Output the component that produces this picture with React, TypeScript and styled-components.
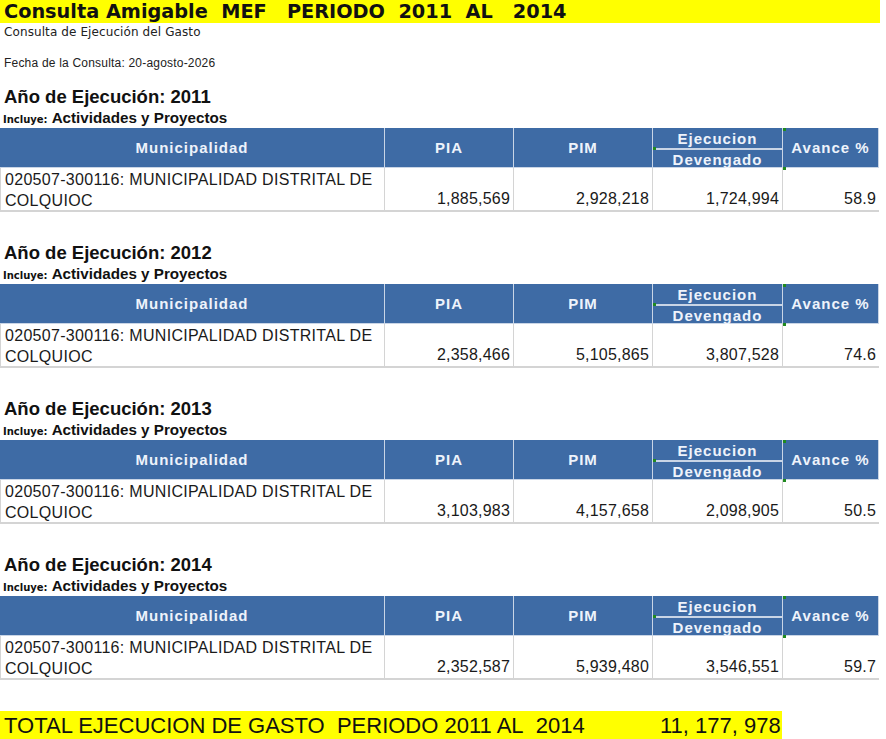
import React from 'react';
import styled, { createGlobalStyle } from 'styled-components';

const GlobalStyle = createGlobalStyle`
  html, body {
    margin: 0;
    padding: 0;
    background: #ffffff;
    font-family: "Liberation Sans", Arial, sans-serif;
    color: #111111;
  }
`;

type Row = { year: number; pia: string; pim: string; dev: string; avance: string };

const rows: Row[] = [
  { year: 2011, pia: '1,885,569', pim: '2,928,218', dev: '1,724,994', avance: '58.9' },
  { year: 2012, pia: '2,358,466', pim: '5,105,865', dev: '3,807,528', avance: '74.6' },
  { year: 2013, pia: '3,103,983', pim: '4,157,658', dev: '2,098,905', avance: '50.5' },
  { year: 2014, pia: '2,352,587', pim: '5,939,480', dev: '3,546,551', avance: '59.7' },
];

const COLS = '385px 129px 139px 130px 96px';

const App: React.FC = () => (
  <Page>
    <GlobalStyle />
    <TitleBar>{'Consulta Amigable  MEF   PERIODO  2011  AL   2014'}</TitleBar>
    <SubTitle>Consulta de Ejecución del Gasto</SubTitle>
    <Fecha>Fecha de la Consulta: 20-agosto-2026</Fecha>
    {rows.map((r, i) => (
      <Section key={r.year} first={i === 0}>
        <YearTitle>Año de Ejecución: {r.year}</YearTitle>
        <Incluye>
          <IncluyeTag>Incluye:</IncluyeTag>
          <span>Actividades y Proyectos</span>
        </Incluye>
        <Table>
          <HeadCell>Municipalidad</HeadCell>
          <HeadCell>PIA</HeadCell>
          <HeadCell>PIM</HeadCell>
          <SplitHead>
            <SplitPart>Ejecucion</SplitPart>
            <SplitPart bottom>Devengado</SplitPart>
            <Marker style={{ left: 0, top: 19 }} />
          </SplitHead>
          <HeadCell>
            Avance %
            <Marker style={{ left: 0, top: 0 }} />
            <Marker style={{ left: 0, bottom: -3 }} />
          </HeadCell>
          <NameCell>
            020507-300116: MUNICIPALIDAD DISTRITAL DE
            <br />
            COLQUIOC
          </NameCell>
          <NumCell>{r.pia}</NumCell>
          <NumCell>{r.pim}</NumCell>
          <NumCell>{r.dev}</NumCell>
          <NumCell>{r.avance}</NumCell>
        </Table>
      </Section>
    ))}
    <TotalBar>
      <TotalLabel>TOTAL EJECUCION DE GASTO&nbsp; PERIODO 2011 AL&nbsp; 2014</TotalLabel>
      <TotalValue>11, 177, 978</TotalValue>
    </TotalBar>
  </Page>
);

const Page = styled.div`
  width: 886px;
  height: 739px;
  overflow: hidden;
`;

const TitleBar = styled.div`
  width: 876px;
  height: 23px;
  background: #ffff00;
  padding-left: 4px;
  font-family: "DejaVu Sans", Verdana, sans-serif;
  font-weight: bold;
  font-size: 19.3px;
  line-height: 23px;
  white-space: pre;
  color: #111111;
`;

const SubTitle = styled.div`
  padding-left: 4px;
  margin-top: 1px;
  height: 16px;
  font-family: "DejaVu Sans", Verdana, sans-serif;
  font-size: 12px;
  line-height: 16px;
  letter-spacing: 0.1px;
  color: #222222;
`;

const Fecha = styled.div`
  padding-left: 4px;
  margin-top: 15px;
  height: 16px;
  font-size: 12px;
  line-height: 16px;
  letter-spacing: 0.2px;
  color: #222222;
`;

const Section = styled.div<{ first?: boolean }>`
  margin-top: ${({ first }) => (first ? '15px' : '30px')};
`;

const YearTitle = styled.div`
  padding-left: 4px;
  height: 22px;
  font-weight: bold;
  font-size: 18.5px;
  line-height: 22px;
  color: #111111;
`;

const Incluye = styled.div`
  display: flex;
  align-items: baseline;
  gap: 4px;
  height: 20px;
  padding-left: 3px;
  font-weight: bold;
  font-size: 15.2px;
  line-height: 20px;
  color: #111111;
`;

const IncluyeTag = styled.span`
  font-family: "DejaVu Sans", Verdana, sans-serif;
  font-size: 10px;
`;

const Table = styled.div`
  display: grid;
  grid-template-columns: ${COLS};
  grid-template-rows: 40px 44px;
  width: 879px;
`;

const HeadCell = styled.div`
  position: relative;
  background: #3e6ba5;
  border-right: 1px solid #c9d5e6;
  border-bottom: 1px solid #c9d5e6;
  display: flex;
  align-items: center;
  justify-content: center;
  color: #eef3fb;
  font-weight: bold;
  font-size: 15px;
  letter-spacing: 1px;
  &:last-of-type {
    border-right: none;
  }
`;

const SplitHead = styled.div`
  position: relative;
  display: grid;
  grid-template-rows: 20px 20px;
  background: #3e6ba5;
  border-right: 1px solid #c9d5e6;
  border-bottom: 1px solid #c9d5e6;
`;

const SplitPart = styled.div<{ bottom?: boolean }>`
  display: flex;
  align-items: center;
  justify-content: center;
  color: #eef3fb;
  font-weight: bold;
  font-size: 15px;
  letter-spacing: 1px;
  border-top: ${({ bottom }) => (bottom ? '2px solid #c9d5e6' : 'none')};
`;

const Marker = styled.span`
  position: absolute;
  width: 3px;
  height: 3px;
  background: #1f8a1f;
`;

const BodyCell = styled.div`
  border-right: 1px solid #d4d4d4;
  border-bottom: 2px solid #d4d4d4;
  font-size: 16px;
  line-height: 21px;
  color: #1a1a1a;
  &:last-child {
    border-right: none;
  }
`;

const NameCell = styled(BodyCell)`
  border-left: 1px solid #d4d4d4;
  padding: 1px 0 0 4px;
  letter-spacing: 0.3px;
`;

const NumCell = styled(BodyCell)`
  display: flex;
  align-items: flex-end;
  justify-content: flex-end;
  padding: 0 3px 1px 0;
  letter-spacing: 0.2px;
`;

const TotalBar = styled.div`
  margin-top: 31px;
  width: 778px;
  height: 30px;
  padding-left: 4px;
  background: #ffff00;
  display: flex;
  align-items: center;
  font-size: 22px;
  color: #111111;
`;

const TotalLabel = styled.span`
  width: 656px;
  white-space: nowrap;
`;

const TotalValue = styled.span`
  white-space: nowrap;
`;

export default App;
